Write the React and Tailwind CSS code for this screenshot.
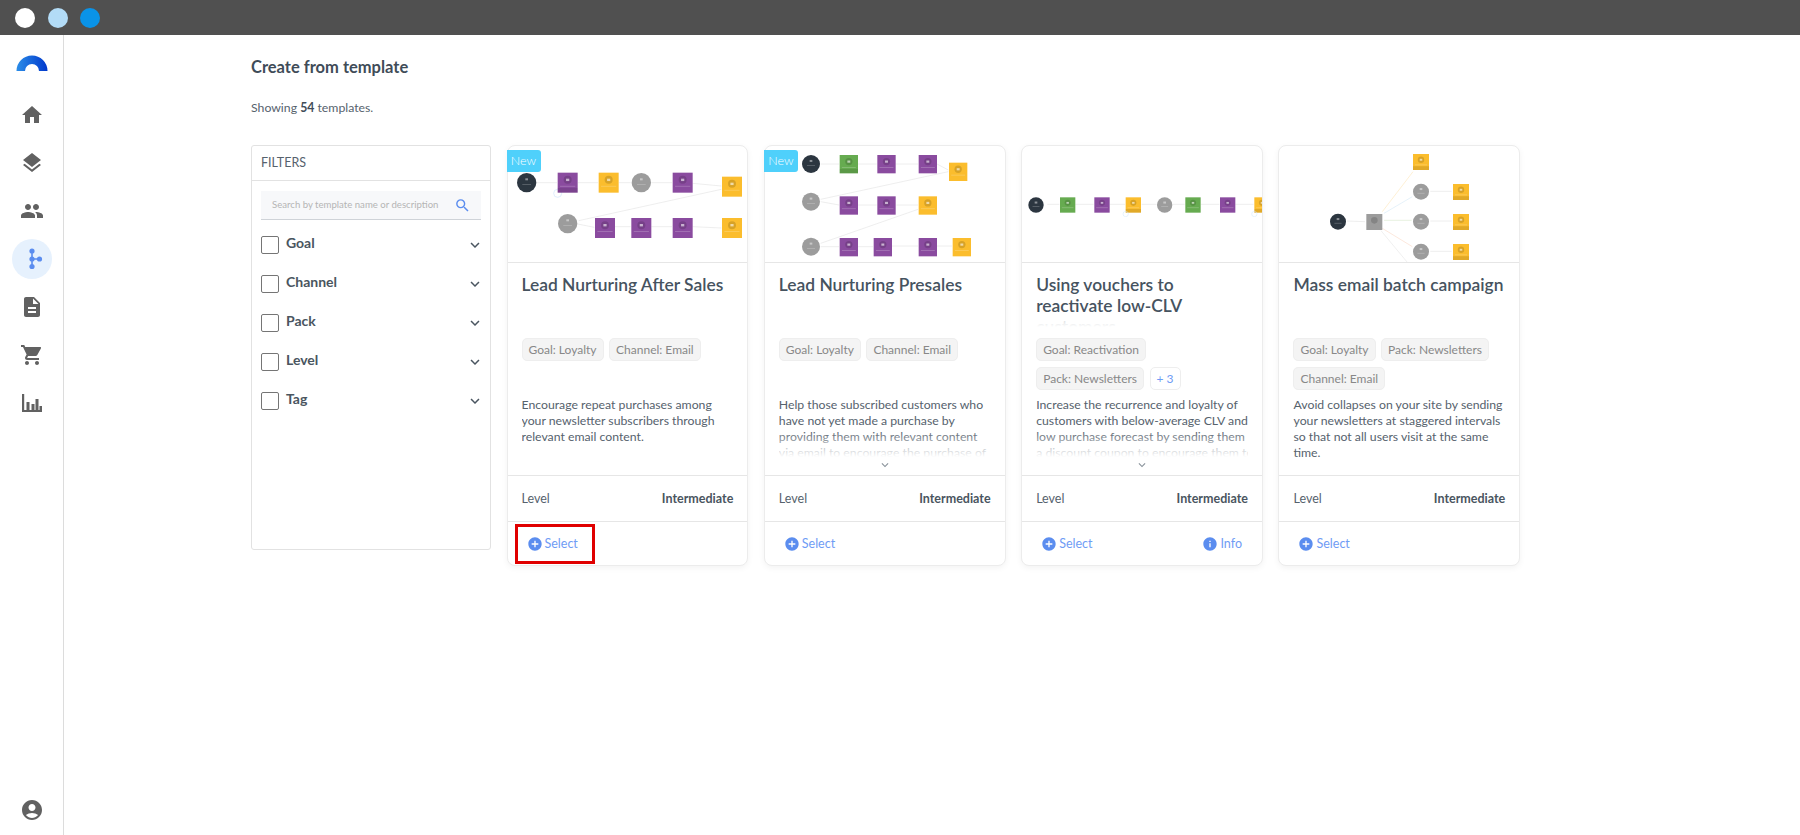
import React from "react";
import { MdHome, MdLayers, MdPeople, MdDescription, MdShoppingCart, MdAccountCircle, MdAddCircle, MdInfo, MdSearch, MdKeyboardArrowDown } from "react-icons/md";

const COL = { purple: "#8a4b9f", yellow: "#fbbd2d", green: "#66ab50", gray: "#9c9c9c", dark: "#2c3640" };

function Square({ x, y, s, c, strip, loop }) {
  const col = COL[c];
  return (
    <g>
      <rect x={x} y={y} width={s} height={s} fill={col} />
      <circle cx={x + s / 2} cy={y + s * 0.36} r={s * 0.2} fill="#000" opacity="0.14" />
      <rect x={x + s * 0.42} y={y + s * 0.3} width={s * 0.16} height={s * 0.12} fill="#fff" opacity="0.6" />
      <rect x={x + s * 0.12} y={y + s * 0.66} width={s * 0.76} height={2} fill="#fff" opacity="0.3" />
      {strip && <rect x={x} y={y + s * 0.76} width={s} height={s * 0.24} fill="#000" opacity="0.1" />}
      {loop && <circle cx={x} cy={y + s + 4} r={8} fill="none" stroke="#cfe6fa" strokeWidth="1.5" />}
    </g>
  );
}

function Round({ x, y, r, c }) {
  return (
    <g>
      <circle cx={x} cy={y} r={r} fill={COL[c]} />
      <rect x={x - 4} y={y - r * 0.45} width={8} height={6} fill="#fff" opacity="0.45" />
      <rect x={x - r * 0.45} y={y + r * 0.15} width={r * 0.9} height={2} fill="#fff" opacity="0.3" />
    </g>
  );
}

function Links({ items, color = "#e6e6e6" }) {
  return items.map((p, i) => (
    <line key={i} x1={p[0]} y1={p[1]} x2={p[2]} y2={p[3]} stroke={p[4] || color} strokeWidth="2" />
  ));
}

function Diagram({ view, children }) {
  return (
    <svg viewBox={view} width="242" height="117" className="block blur-[0.6px]">
      {children}
    </svg>
  );
}

const D1 = (
  <Diagram view="24 18 726 351">
    <Links items={[[110,128,171,128],[233,128,294,128],[356,128,392,128],[454,128,516,128],[578,130,664,138],[664,148,236,242],[233,252,283,262],[345,260,392,260],[454,260,516,260],[578,260,664,264]]} />
    <circle cx="173" cy="160" r="12" fill="none" stroke="#cfe6fa" strokeWidth="2" />
    <Round x={80} y={128} r={29} c="dark" />
    <Square x={173} y={98} s={60} c="purple" strip />
    <Square x={296} y={98} s={60} c="yellow" />
    <Round x={424} y={128} r={29} c="gray" />
    <Square x={518} y={98} s={60} c="purple" />
    <Square x={666} y={110} s={60} c="yellow" />
    <Round x={203} y={251} r={29} c="gray" />
    <Square x={285} y={234} s={60} c="purple" />
    <Square x={394} y={234} s={60} c="purple" />
    <Square x={518} y={234} s={60} c="purple" />
    <Square x={666} y={234} s={60} c="yellow" />
  </Diagram>
);

const D2 = (
  <Diagram view="30 18 726 351">
    <Links items={[[197,72,252,72],[309,72,365,72],[422,72,489,72],[546,72,580,90],[580,95,197,178],[197,185,252,195],[309,195,365,195],[424,195,489,195],[489,208,197,310],[197,320,252,320],[309,320,354,320],[411,318,489,318],[546,318,591,318]]} />
    <Round x={168} y={72} r={27} c="dark" />
    <Square x={254} y={45} s={55} c="green" strip />
    <Square x={367} y={45} s={55} c="purple" />
    <Square x={491} y={45} s={55} c="purple" />
    <Square x={582} y={68} s={55} c="yellow" />
    <Round x={168} y={185} r={27} c="gray" />
    <Square x={254} y={169} s={55} c="purple" />
    <Square x={367} y={169} s={55} c="purple" />
    <Square x={491} y={169} s={55} c="yellow" />
    <Round x={168} y={320} r={27} c="gray" />
    <Square x={254} y={294} s={55} c="purple" />
    <Square x={356} y={294} s={55} c="purple" />
    <Square x={491} y={294} s={55} c="purple" />
    <Square x={593} y={294} s={55} c="yellow" />
  </Diagram>
);

const D3 = (
  <Diagram view="24 18 726 351">
    <Links items={[[100,193,136,193],[184,193,239,193],[287,193,333,193],[383,193,428,193],[476,193,512,193],[560,193,616,193],[664,193,719,193]]} />
    <Round x={66} y={195} r={23} c="dark" />
    <Square x={138} y={172} s={46} c="green" />
    <Square x={241} y={172} s={46} c="purple" />
    <Square x={335} y={172} s={46} c="yellow" strip loop />
    <Round x={452} y={195} r={23} c="gray" />
    <Square x={514} y={172} s={46} c="green" />
    <Square x={618} y={172} s={46} c="purple" />
    <Square x={721} y={172} s={46} c="yellow" strip loop />
  </Diagram>
);

const D4 = (
  <Diagram view="30 18 726 351">
    <Links items={[[234,243,288,245],[340,215,432,95,"#fde9c0"],[345,220,430,170,"#d9ecf8"],[345,241,428,241,"#dcecd2"],[340,265,430,320,"#fbdccb"],[336,272,415,367,"#e8e8e8"],[484,154,548,154],[484,243,548,243],[484,334,548,334]]} />
    <Round x={207} y={245} r={24} c="dark" />
    <rect x="292" y="222" width="48" height="48" fill="#9c9c9c" />
    <circle cx="316" cy="241" r="10" fill="#000" opacity="0.15" />
    <Square x={432} y={42} s={48} c="yellow" strip />
    <Round x={456} y={155} r={24} c="gray" />
    <Square x={552} y={132} s={48} c="yellow" strip />
    <Round x={456} y={245} r={24} c="gray" />
    <Square x={552} y={222} s={48} c="yellow" strip />
    <Round x={456} y={335} r={24} c="gray" />
    <Square x={552} y={312} s={48} c="yellow" strip />
  </Diagram>
);

function Tag({ children }) {
  return (
    <span className="flex h-[23px] items-center rounded-[5px] border border-[#eeeeee] bg-[#f4f4f4] px-[6px] text-[12px] text-[#888888]">
      {children}
    </span>
  );
}

function Lines({ items }) {
  return items.map((l, i) => (
    <div key={i} className="whitespace-nowrap">{l}</div>
  ));
}

function Card({ diagram, isNew, title, tags, more, desc, fade, info, highlight }) {
  return (
    <div className="relative flex h-[421px] w-[241.83px] shrink-0 flex-col rounded-[8px] border border-[#ececec] bg-white shadow-[0_2px_6px_rgba(0,0,0,0.05)]">
      <div className="h-[117px] shrink-0 overflow-hidden rounded-t-[8px] border-b border-[#e6e6e6]">{diagram}</div>
      {isNew && (
        <span className="absolute left-[-1px] top-[4px] flex h-[22px] w-[34px] items-center justify-center rounded-r-[3px] bg-[#4fd0fb] text-[12.5px] font-light text-white">
          New
        </span>
      )}
      <div className="flex h-[212px] shrink-0 flex-col px-[14px] pt-[11px]">
        <div className="relative h-[53px] shrink-0 overflow-hidden text-[17.4px] font-semibold leading-[21px] text-[#46535f]">
          <Lines items={title} />
          <div className="absolute inset-x-0 bottom-0 h-[11px] bg-gradient-to-b from-white/70 to-white" />
        </div>
        <div className="mt-[11px] flex h-[52px] shrink-0 flex-wrap content-start gap-x-[5.5px] gap-y-[6px]">
          {tags.map((t) => (
            <Tag key={t}>{t}</Tag>
          ))}
          {more && (
            <span className="flex h-[23px] items-center rounded-[5px] border border-[#eeeeee] px-[6px] text-[12px] text-[#6f9cf5]">
              {more}
            </span>
          )}
        </div>
        <div className="relative mt-[7px] h-[76px] shrink-0 overflow-hidden text-[12.25px] leading-[16px] text-[#56626d]">
          <Lines items={desc} />
          {fade && (
            <>
              <div className="absolute inset-x-0 bottom-0 h-[42px] bg-gradient-to-b from-white/0 to-white to-[62%]" />
              <MdKeyboardArrowDown size={14} className="absolute bottom-[1px] left-1/2 -translate-x-1/2 text-[#8b949c]" />
            </>
          )}
        </div>
      </div>
      <div className="flex h-[46px] shrink-0 items-center justify-between border-t border-[#e6e6e6] px-[14px] pt-[1px] text-[12.5px] text-[#56626d]">
        <span>Level</span>
        <span className="font-bold text-[#4a5560]">Intermediate</span>
      </div>
      <div className="flex flex-1 items-center justify-between border-t border-[#e6e6e6] pl-[19px] pr-[20px] text-[12.5px] text-[#6f9cf5]">
        <span className="flex items-center gap-[2px]">
          <MdAddCircle size={16} className="text-[#5b8def]" />
          <span className="translate-y-[1px]">Select</span>
        </span>
        {info && (
          <span className="flex items-center gap-[2px]">
            <MdInfo size={16} className="text-[#5b8def]" />
            <span className="translate-y-[1px]">Info</span>
          </span>
        )}
      </div>
      {highlight && (
        <div className="absolute bottom-[1px] left-[7px] h-[40px] w-[80px] border-[3px] border-[#e00000]" />
      )}
    </div>
  );
}

function FilterRow({ label }) {
  return (
    <div className="flex h-[39px] items-center pl-[9px] pr-[6px]">
      <span className="h-[18px] w-[18px] shrink-0 rounded-[2px] border border-[#757575]" />
      <span className="ml-[7px] flex-1 -translate-y-[2px] text-[14px] font-bold text-[#4a5560]">{label}</span>
      <MdKeyboardArrowDown size={18} className="text-[#4a5560]" />
    </div>
  );
}

function SideIcon({ children, active }) {
  return (
    <div className={`flex h-10 w-10 items-center justify-center rounded-full text-[#616161] ${active ? "bg-[#e6f1fd]" : ""}`}>
      {children}
    </div>
  );
}

export default function App() {
  return (
    <div className="flex h-[835px] w-[1800px] flex-col overflow-hidden bg-white font-['Lato',sans-serif]">
      <div className="flex h-[35px] shrink-0 items-center gap-[12.5px] bg-[#505050] pl-[15px]">
        <span className="h-5 w-5 rounded-full bg-white" />
        <span className="h-5 w-5 rounded-full bg-[#b3dcf7]" />
        <span className="h-5 w-5 rounded-full bg-[#0a93e8]" />
      </div>
      <div className="flex min-h-0 flex-1">
        <aside className="flex w-[64px] shrink-0 flex-col items-center border-r border-[#dcdcdc] pb-[5px] pl-[1px] pt-[20px]">
          <svg width="32" height="16" viewBox="0 0 32 16" className="mb-[24px] shrink-0">
            <defs>
              <linearGradient id="lg" x1="0" x2="1" y1="0" y2="0">
                <stop offset="0" stopColor="#2b8de8" />
                <stop offset="1" stopColor="#0038cc" />
              </linearGradient>
            </defs>
            <path d="M0.5 16a15.5 15.5 0 0 1 31 0h-8.5a7 7 0 0 0-14 0z" fill="url(#lg)" />
          </svg>
          <div className="flex flex-col gap-[8px]">
            <SideIcon><MdHome size={24} /></SideIcon>
            <SideIcon><MdLayers size={24} /></SideIcon>
            <SideIcon><MdPeople size={24} /></SideIcon>
            <SideIcon active>
              <svg width="24" height="24" viewBox="0 0 24 24">
                <path d="M12 4v16M12 12h7" stroke="#5b8def" strokeWidth="1.6" fill="none" />
                <circle cx="12" cy="4" r="2.6" fill="#5b8def" />
                <circle cx="12" cy="12" r="2.6" fill="#5b8def" />
                <circle cx="12" cy="19.5" r="2.6" fill="#5b8def" />
                <circle cx="19.5" cy="12" r="2.6" fill="#5b8def" />
              </svg>
            </SideIcon>
            <SideIcon><MdDescription size={24} /></SideIcon>
            <SideIcon><MdShoppingCart size={24} /></SideIcon>
            <SideIcon>
              <svg width="24" height="24" viewBox="0 0 24 24" fill="#616161">
                <path d="M2 3h2.2v16H22v2H2zM6.5 11h3v8h-3zM11.5 13h3v6h-3zM15.5 8h3v11h-3zM19.5 15h2.5v4h-2.5z" />
              </svg>
            </SideIcon>
          </div>
          <div className="mt-auto"><SideIcon><MdAccountCircle size={24} /></SideIcon></div>
        </aside>
        <main className="min-w-0 flex-1 pl-[187px]">
          <h1 className="pt-[22px] text-[16.5px] font-bold leading-[20px] text-[#3f4c58]">Create from template</h1>
          <p className="mt-[23px] text-[12.25px] leading-[16px] text-[#56626d]">
            Showing <b className="font-bold text-[#3f4c58]">54</b> templates.
          </p>
          <div className="mt-[29px] flex items-start gap-[15.5px]">
            <section className="h-[405px] w-[240px] shrink-0 rounded-[3px] border border-[#e2e2e2]">
              <div className="flex h-[35px] items-center border-b border-[#e2e2e2] pl-[9px] pt-[1px] text-[12.5px] text-[#56626d]">FILTERS</div>
              <div className="mx-[9px] mt-[10px] flex h-[29px] items-center justify-between whitespace-nowrap border-b border-[#cfd3d8] bg-[#f7f8fa] pl-[11px] pr-[10px] text-[9.6px] text-[#b5b5b5]">
                Search by template name or description
                <MdSearch size={17} className="text-[#5b8def]" />
              </div>
              <div className="mt-[5px]">
                {["Goal", "Channel", "Pack", "Level", "Tag"].map((l) => (
                  <FilterRow key={l} label={l} />
                ))}
              </div>
            </section>
            <Card
              diagram={D1}
              isNew
              highlight
              title={["Lead Nurturing After Sales"]}
              tags={["Goal: Loyalty", "Channel: Email"]}
              desc={["Encourage repeat purchases among", "your newsletter subscribers through", "relevant email content."]}
            />
            <Card
              diagram={D2}
              isNew
              fade
              title={["Lead Nurturing Presales"]}
              tags={["Goal: Loyalty", "Channel: Email"]}
              desc={["Help those subscribed customers who", "have not yet made a purchase by", "providing them with relevant content", "via email to encourage the purchase of"]}
            />
            <Card
              diagram={D3}
              fade
              info
              title={["Using vouchers to", "reactivate low-CLV", "customers"]}
              tags={["Goal: Reactivation", "Pack: Newsletters"]}
              more="+ 3"
              desc={["Increase the recurrence and loyalty of", "customers with below-average CLV and", "low purchase forecast by sending them", "a discount coupon to encourage them to"]}
            />
            <Card
              diagram={D4}
              title={["Mass email batch campaign"]}
              tags={["Goal: Loyalty", "Pack: Newsletters", "Channel: Email"]}
              desc={["Avoid collapses on your site by sending", "your newsletters at staggered intervals", "so that not all users visit at the same", "time."]}
            />
          </div>
        </main>
      </div>
    </div>
  );
}
